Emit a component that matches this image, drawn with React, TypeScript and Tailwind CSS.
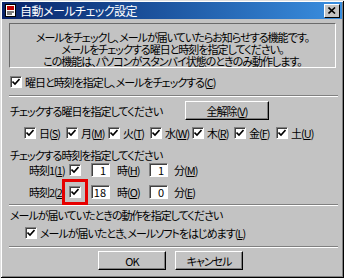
import { ReactNode } from 'react';

const jp = "font-['Noto_Sans_CJK_JP','Noto_Sans',sans-serif] [font-feature-settings:'palt'] text-[11px] tracking-[-1px] leading-[12px] text-black whitespace-nowrap";

const Check = ({ className = '' }: { className?: string }) => (
  <span className={`w-[12px] h-[12px] shrink-0 bg-white border border-t-[#808080] border-l-[#808080] border-b-white border-r-white shadow-[inset_1px_1px_0_#404040] flex items-center justify-center ${className}`}>
    <svg width="8" height="8" viewBox="0 0 8 8">
      <path d="M0.5 3.5 L3 6 L7.5 1" stroke="#000" strokeWidth="1.6" fill="none" />
    </svg>
  </span>
);

const Field = ({ value }: { value: string }) => (
  <span className="w-[19px] h-[14px] bg-white border border-t-[#808080] border-l-[#808080] border-b-white border-r-white shadow-[inset_1px_1px_0_#404040] flex items-center justify-end pr-[3px] tracking-normal">
    {value}
  </span>
);

const Sep = ({ className = '' }: { className?: string }) => (
  <div className={`h-[2px] border-t border-t-[#808080] border-b border-b-white ${className}`} />
);

const Btn = ({ children, className = '' }: { children: ReactNode; className?: string }) => (
  <div className={`h-[19px] bg-[#c3c3c3] border border-t-white border-l-white border-b-black border-r-black shadow-[inset_-1px_-1px_0_#808080] flex items-center justify-center ${className}`}>
    {children}
  </div>
);

const Day = ({ label, k }: { label: string; k: string }) => (
  <div className="w-[42px] flex items-center gap-[3px]">
    <Check />
    <span>
      {label}(<u>{k}</u>)
    </span>
  </div>
);

export default function App() {
  return (
    <div className={`w-[344px] h-[278px] bg-[#c3c3c3] p-[2px] shadow-[inset_1px_1px_0_#dfdfdf,inset_-1px_-1px_0_#000,inset_2px_2px_0_#fff,inset_-2px_-2px_0_#808080] flex flex-col ${jp}`}>
      {/* title bar */}
      <div className="h-[17px] bg-gradient-to-r from-[#0a246a] to-[#3a8fe0] flex items-center pl-[2px] pr-[2px]">
        <svg width="13" height="13" viewBox="0 0 13 13" className="shrink-0">
          <rect x="1.5" y="0.5" width="10" height="12" fill="#fff" stroke="#000" />
          <rect x="3" y="2" width="7" height="4" fill="#c00000" />
          <path d="M3 8 H10 M3 10 H8" stroke="#000" />
        </svg>
        <span className="ml-[3px] text-white text-[12px] tracking-[-0.5px]">自動メールチェック設定</span>
        <div className="ml-auto w-[16px] h-[14px] bg-[#c3c3c3] border border-t-white border-l-white border-b-black border-r-black flex items-center justify-center">
          <svg width="8" height="7" viewBox="0 0 8 7">
            <path d="M0.5 0.5 L7 6.5 M7 0.5 L0.5 6.5" stroke="#000" strokeWidth="1.6" />
          </svg>
        </div>
      </div>

      <div className="pl-[7px] pr-[4px] flex flex-col">
        {/* info box */}
        <div className="mt-[4px] w-[327px] h-[45px] pt-[7px] border border-t-[#6b6b6b] border-l-[#6b6b6b] border-b-white border-r-white flex flex-col items-center leading-[12px]">
          <div>メールをチェックし、メールが届いていたらお知らせする機能です。</div>
          <div>メールをチェックする曜日と時刻を指定してください。</div>
          <div>この機能は、パソコンがスタンバイ状態のときのみ動作します。</div>
        </div>

        <div className="mt-[7px] h-[13px] flex items-center gap-[3px] pl-[1px]">
          <Check />
          <span>
            曜日と時刻を指定し、メールをチェックする(<u>C</u>)
          </span>
        </div>

        <Sep className="mt-[7px] w-[329px]" />

        <div className="mt-[4px] h-[19px] flex items-center pl-[1px]">
          <span>チェックする曜日を指定してください</span>
          <Btn className="ml-auto mr-[69px] w-[84px]">
            全解除(<u>V</u>)
          </Btn>
        </div>

        <div className="mt-[6px] h-[13px] flex items-center pl-[15px]">
          <Day label="日" k="S" />
          <Day label="月" k="M" />
          <Day label="火" k="T" />
          <Day label="水" k="W" />
          <Day label="木" k="R" />
          <Day label="金" k="F" />
          <Day label="土" k="U" />
        </div>

        <div className="mt-[10px] h-[12px] flex items-center pl-[1px]">チェックする時刻を指定してください</div>

        <div className="mt-[2px] h-[14px] flex items-center pl-[20px]">
          <span className="w-[40px]">
            時刻1(<u>1</u>)
          </span>
          <Check />
          <span className="ml-[10px]">
            <Field value="1" />
          </span>
          <span className="ml-[7px] w-[32px]">
            時(<u>H</u>)
          </span>
          <Field value="1" />
          <span className="ml-[6px]">
            分(<u>M</u>)
          </span>
        </div>

        <div className="mt-[8px] h-[14px] flex items-center pl-[20px]">
          <span className="w-[40px]">
            時刻2(<u>2</u>)
          </span>
          <span className="relative">
            <Check />
            <span className="absolute left-[-7px] top-[-7px] w-[26px] h-[26px] border-[3px] border-[#e60000]" />
          </span>
          <span className="ml-[10px]">
            <Field value="18" />
          </span>
          <span className="ml-[7px] w-[32px]">
            時(<u>O</u>)
          </span>
          <Field value="0" />
          <span className="ml-[6px]">
            分(<u>E</u>)
          </span>
        </div>

        <Sep className="mt-[5px] w-[329px]" />

        <div className="mt-[3px] h-[12px] flex items-center pl-[1px]">メールが届いていたときの動作を指定してください</div>

        <div className="mt-[5px] h-[13px] flex items-center gap-[3px] pl-[16px]">
          <Check />
          <span>
            メールが届いたとき、メールソフトをはじめます(<u>L</u>)
          </span>
        </div>

        <Sep className="mt-[7px] w-[329px]" />

        <div className="mt-[3px] flex items-center pl-[89px] gap-[9px]">
          <Btn className="w-[68px]">OK</Btn>
          <Btn className="w-[68px]">キャンセル</Btn>
        </div>
      </div>
    </div>
  );
}
